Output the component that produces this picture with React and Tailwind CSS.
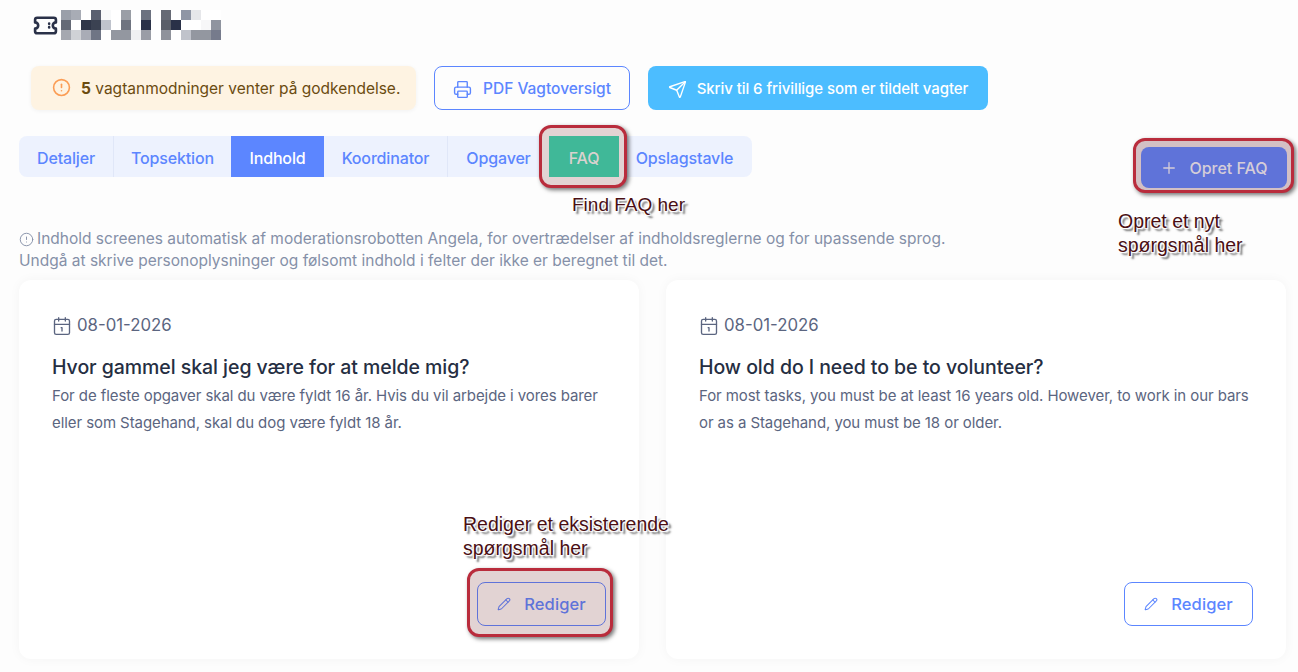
import { CircleAlert, Printer, Send, Plus, Pencil, Calendar1 } from 'lucide-react';

const W = '#ffffff';
const BLUR = [
  '#9a9fa9', '#a8acb5', W, '#5a6070', '#f8f9fa', W, '#9a9ea6', W, '#6c7280', W, '#666a75', W, '#8f96a5', '#e6e7ea', W, W,
  '#656a76', W, '#2f3648', '#3b4252', '#bfc3cc', W, '#6f7480', W, '#2a3148', W, '#5a5e68', '#2a3148', W, W, '#f7f7f8', '#8f949f',
  '#a5a8b0', '#d0d2d6', '#a9acb6', '#6f7585', W, '#9397a0', '#9397a0', '#eff0f2', '#9a9da6', W, '#8f929b', W, '#c0c3cb', '#9397a0', '#9397a0', '#767b8c',
];

const TABS = [
  { label: 'Detaljer', width: 'w-[95px]', border: true },
  { label: 'Topsektion', width: 'w-[117px]' },
  { label: 'Indhold', width: 'w-[93px]', active: true },
  { label: 'Koordinator', width: 'w-[124px]', border: true },
  { label: 'Opgaver', width: 'w-[101px]' },
];

const labelClass =
  "absolute text-[19.5px] leading-[24px] whitespace-nowrap text-[#4a0f14] font-['Liberation_Sans',sans-serif] [text-shadow:0_0_1px_#fff,-1px_-1px_1px_#fff,1px_-1px_1px_#fff,-1px_1px_1px_#fff,1px_1px_1px_#fff,3px_3px_2px_#666]";
const markClass =
  'absolute rounded-[12px] border-[3px] border-[#b92c3c] shadow-[2px_2px_4px_rgba(0,0,0,0.55)]';

function TicketIcon() {
  return (
    <svg width="25" height="25" viewBox="0 0 24 24" fill="none" stroke="#2a3148" strokeWidth="2.5" strokeLinecap="round" strokeLinejoin="round" className="mt-[3px] shrink-0">
      <path d="M2 9a3 3 0 0 1 0 6v2.5a2 2 0 0 0 2 2h16a2 2 0 0 0 2-2V15a3 3 0 0 1 0-6V6.500a2 2 0 0 0-2-2H4a2 2 0 0 0-2 2Z" />
      <path d="M15.500 10.200v.2M15.500 13.600v.2" />
    </svg>
  );
}

function FaqCard({ title, lines, marked }) {
  return (
    <div className="flex-1 h-[379px] bg-white rounded-[12px] shadow-[0_0_12px_rgba(0,0,0,0.04)] p-[33px] flex flex-col">
      <div className="flex items-center gap-[5px] text-[16.8px] text-[#5b6580] h-[24px] mt-[1px]">
        <Calendar1 size={20} strokeWidth={1.6} />
        <span>08-01-2026</span>
      </div>
      <h3 className="mt-[17px] text-[19.5px] leading-[24px] font-medium text-[#252e42] tracking-[-0.05px]">{title}</h3>
      <div className="mt-[3px] text-[15px] leading-[27px] text-[#5b6580] tracking-[-0.08px]">
        {lines.map((l) => (
          <p key={l}>{l}</p>
        ))}
      </div>
      <div className="mt-auto flex justify-end">
        <div className="relative">
          {marked && (
            <>
              <div className={`${markClass} left-[-10px] right-[-7px] top-[-14px] bottom-[-11px] bg-[#e2d3d3]`} />
              <span className={`${labelClass} left-[-14px] top-[-70px]`}>
                Rediger et eksisterende
                <br />
                spørgsmål her
              </span>
            </>
          )}
          <button
            className={`relative w-[129px] h-[44px] rounded-[8px] border flex items-center justify-center gap-[13px] text-[16.5px] tracking-[0.1px] font-medium ${marked ? 'border-[#5f73d9] text-[#5f73d9]' : 'border-[#5c86ff] text-[#5c86ff]'}`}
          >
            <Pencil size={14} strokeWidth={1.75} />
            Rediger
          </button>
        </div>
      </div>
    </div>
  );
}

export default function App() {
  return (
    <div className="w-[1298px] h-[672px] overflow-hidden bg-[#fdfdfd] px-[19px] font-['Inter',sans-serif]">
      {/* header */}
      <div className="h-[66px] pl-[14px] pt-[10px] flex items-start gap-[3px]">
        <TicketIcon />
        <div className="grid grid-cols-[repeat(16,10px)] grid-rows-[repeat(3,10px)]">
          {BLUR.map((c, i) => (
            <div key={i} style={{ backgroundColor: c }} />
          ))}
        </div>
      </div>

      {/* action row */}
      <div className="flex gap-[18px] pl-[12px]">
        <div className="w-[385px] h-[44px] pt-[2px] rounded-[8px] bg-[#fef3e2] shadow-[0_1px_4px_rgba(0,0,0,0.05)] flex items-center pl-[21px] gap-[10px] text-[15.5px] text-[#6b4b10] whitespace-nowrap">
          <CircleAlert size={19} strokeWidth={2} className="text-[#fb9d55] shrink-0 mt-[-3px]" />
          <span>
            <b className="font-bold">5</b> vagtanmodninger venter på godkendelse.
          </span>
        </div>
        <button className="w-[196px] h-[44px] pt-[2px] rounded-[8px] border border-[#5c86ff] flex items-center justify-center gap-[11px] text-[#5c86ff] text-[15.5px] font-medium">
          <Printer size={19} strokeWidth={1.75} />
          PDF Vagtoversigt
        </button>
        <button className="w-[340px] h-[44px] pt-[2px] rounded-[8px] bg-[#4cbdff] flex items-center justify-center gap-[10px] text-white text-[15px] font-medium tracking-[-0.07px] whitespace-nowrap">
          <Send size={19} strokeWidth={1.75} />
          Skriv til 6 frivillige som er tildelt vagter
        </button>
      </div>

      {/* tabs + create button */}
      <div className="mt-[26px] flex items-start justify-between">
        <div className="flex h-[41px] rounded-[8px] bg-[#edf2fe] text-[16px] font-medium tracking-[-0.15px] text-[#5c86ff]">
          {TABS.map((t) => (
            <div
              key={t.label}
              className={`${t.width} pt-[2px] flex items-center justify-center ${t.active ? 'bg-[#5c86ff] text-white' : ''} ${t.border ? 'border-r border-[#e0e7f8]' : ''}`}
            >
              {t.label}
            </div>
          ))}
          <div className="relative w-[70px]">
            <div className={`${markClass} left-[-10px] right-[-8px] top-[-11px] bottom-[-11px] bg-[#e2d3d3]`} />
            <div className="relative h-full pt-[2px] flex items-center justify-center bg-[#40b898] text-[#d9d2cf]">FAQ</div>
            <span className={`${labelClass} left-[23px] top-[57px] text-[19px] tracking-normal`}>Find FAQ her</span>
          </div>
          <div className="w-[133px] pt-[2px] pr-[2px] flex items-center justify-center">Opslagstavle</div>
        </div>

        <div className="relative mt-[11px] mr-[-8px]">
          <div className={`${markClass} left-[-8px] right-[-7px] top-[-9px] bottom-[-5px] bg-[#d3c0c4]`} />
          <button className="relative w-[146px] h-[41px] rounded-[8px] bg-[#5f73d9] flex items-center justify-center gap-[11px] text-[#d5cdd8] text-[16px] font-medium">
            <Plus size={18} strokeWidth={1.75} />
            Opret FAQ
          </button>
          <span className={`${labelClass} left-[-23px] top-[62px]`}>
            Opret et nyt
            <br />
            spørgsmål her
          </span>
        </div>
      </div>

      {/* moderation note */}
      <div className="mt-[40px] text-[15.5px] leading-[22px] text-[#8590a8] whitespace-nowrap">
        <p className="flex items-center gap-[3px]">
          <CircleAlert size={15} strokeWidth={1.5} />
          Indhold screenes automatisk af moderationsrobotten Angela, for overtrædelser af indholdsreglerne og for upassende sprog.
        </p>
        <p>Undgå at skrive personoplysninger og følsomt indhold i felter der ikke er beregnet til det.</p>
      </div>

      {/* cards */}
      <div className="mt-[8px] flex gap-[27px] w-[1267px]">
        <FaqCard
          marked
          title="Hvor gammel skal jeg være for at melde mig?"
          lines={[
            'For de fleste opgaver skal du være fyldt 16 år. Hvis du vil arbejde i vores barer',
            'eller som Stagehand, skal du dog være fyldt 18 år.',
          ]}
        />
        <FaqCard
          title="How old do I need to be to volunteer?"
          lines={[
            'For most tasks, you must be at least 16 years old. However, to work in our bars',
            'or as a Stagehand, you must be 18 or older.',
          ]}
        />
      </div>
    </div>
  );
}
